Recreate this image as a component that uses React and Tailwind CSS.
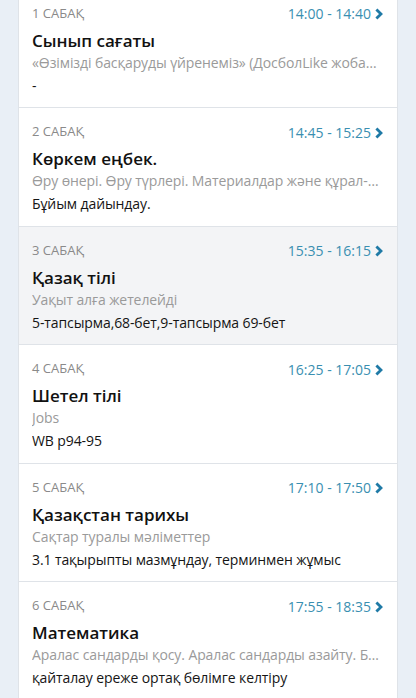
import React from 'react';

const lessons = [
  {
    num: 1,
    time: '14:00 - 14:40',
    title: 'Сынып сағаты',
    topic: '«Өзімізді басқаруды үйренеміз» (ДосболLike жобасы)',
    homework: '-',
  },
  {
    num: 2,
    time: '14:45 - 15:25',
    title: 'Көркем еңбек.',
    topic: 'Өру өнері. Өру түрлері. Материалдар және құрал-жабдықтар',
    homework: 'Бұйым дайындау.',
  },
  {
    num: 3,
    time: '15:35 - 16:15',
    title: 'Қазақ тілі',
    topic: 'Уақыт алға жетелейді',
    homework: '5-тапсырма,68-бет,9-тапсырма 69-бет',
    active: true,
  },
  {
    num: 4,
    time: '16:25 - 17:05',
    title: 'Шетел тілі',
    topic: 'Jobs',
    homework: 'WB p94-95',
  },
  {
    num: 5,
    time: '17:10 - 17:50',
    title: 'Қазақстан тарихы',
    topic: 'Сақтар туралы мәліметтер',
    homework: '3.1 тақырыпты мазмұндау, терминмен жұмыс',
  },
  {
    num: 6,
    time: '17:55 - 18:35',
    title: 'Математика',
    topic: 'Аралас сандарды қосу. Аралас сандарды азайту. Бөлшектер',
    homework: 'қайталау ереже ортақ бөлімге келтіру',
  },
];

// bold ">" used next to lesson time
const Chevron = () => (
  <svg width="8" height="12" viewBox="0 0 8 12" className="ml-[4px] mt-[1px]">
    <path d="M1.4 1.4 L6 6 L1.4 10.6" fill="none" stroke="#1f7aa6" strokeWidth="2.8" />
  </svg>
);

const LessonRow = ({ lesson }) => (
  <div
    className={`h-[118.5px] border-b border-[#dfe3e8] pl-[13px] pr-[14px] pt-[14px] ${
      lesson.active ? 'bg-[#f3f4f6]' : 'bg-white'
    }`}
  >
    <div className="flex items-center justify-between h-[20px]">
      <span className="text-[13px] text-[#8a8a8a]">{lesson.num} САБАҚ</span>
      <span className="flex items-center text-[14px] text-[#3a8fb1]">
        {lesson.time}
        <Chevron />
      </span>
    </div>
    <div className="mt-[5px] text-[17px] leading-[24px] font-semibold text-[#111]">
      {lesson.title}
    </div>
    <div className="text-[14px] leading-[20px] tracking-[-0.1px] text-[#9a9a9a] truncate">
      {lesson.topic}
    </div>
    <div className="mt-[3px] text-[14px] leading-[20px] tracking-[-0.1px] text-[#151515] truncate">
      {lesson.homework}
    </div>
  </div>
);

export default function App() {
  return (
    <div
      className="h-[698px] overflow-hidden bg-[#e9eff6] px-[18px]"
      style={{ fontFamily: '"Open Sans", "Noto Sans", sans-serif' }}
    >
      <div className="-mt-[10.5px] border-x border-[#dfe3e8] w-[380px]">
        {lessons.map((l) => (
          <LessonRow key={l.num} lesson={l} />
        ))}
      </div>
    </div>
  );
}
